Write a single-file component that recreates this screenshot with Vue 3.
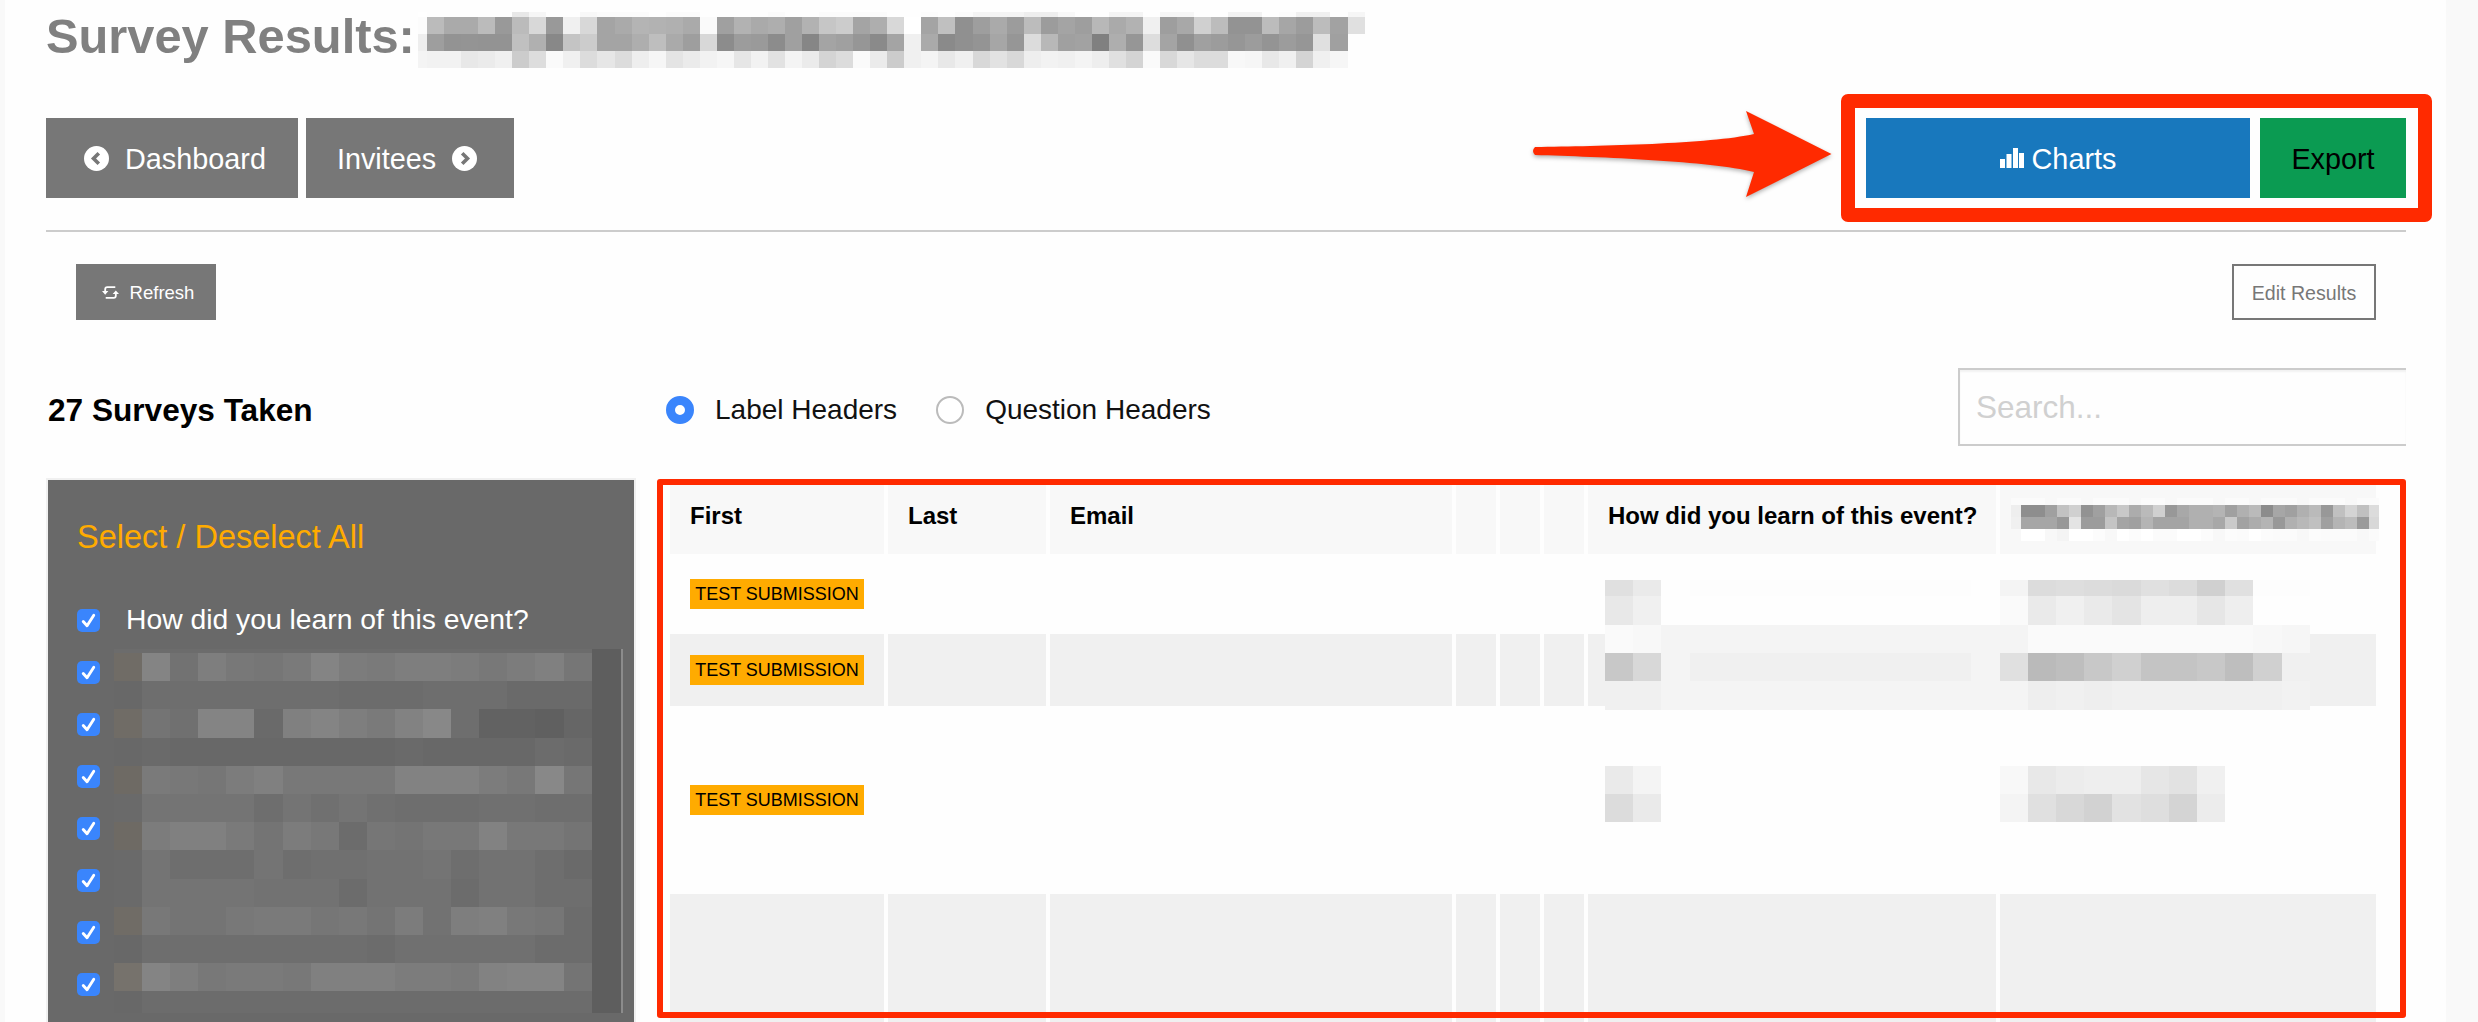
<template>
  <div class="page">
    <div class="title-row">
      <h1>Survey Results:</h1>
      <div class="mosaic title-blur" :style="titleBlur.style">
        <i v-for="(c, i) in titleBlur.cells" :key="i" :style="{ background: c }"></i>
      </div>
    </div>

    <div class="nav-row">
      <a class="btn grey dash">
        <svg class="round" viewBox="0 0 25 25"><circle cx="12.5" cy="12.5" r="12.5" fill="#fff"/><path d="M14.8 7.2 9.5 12.5l5.3 5.3" fill="none" stroke="#777" stroke-width="3.6"/></svg>
        <span>Dashboard</span>
      </a>
      <a class="btn grey invitees">
        <span>Invitees</span>
        <svg class="round" viewBox="0 0 25 25"><circle cx="12.5" cy="12.5" r="12.5" fill="#fff"/><path d="m10.2 7.2 5.3 5.3-5.3 5.3" fill="none" stroke="#777" stroke-width="3.6"/></svg>
      </a>
      <div class="nav-right">
        <a class="btn charts">
          <svg class="bars" viewBox="0 0 24 20" fill="#fff"><rect y="11" width="5" height="9"/><rect x="6.5" y="6" width="5" height="14"/><rect x="13" width="5" height="20"/><rect x="19" y="5" width="5" height="15"/></svg>
          <span>Charts</span>
        </a>
        <a class="btn export"><span>Export</span></a>
      </div>
      <!-- annotation arrow and box -->
      <svg class="arrow" viewBox="0 0 310 100"><path d="M5 39C70 38 180 36 224 26L216 3l85.500 43L216 89l8-25C180 53 70 49 5 47Q1 43 5 39Z" fill="#ff2a00"/></svg>
      <div class="mark-box"></div>
    </div>

    <hr />

    <div class="tool-row">
      <a class="small-btn refresh">
        <svg class="sync" viewBox="0 0 16 16"><path d="M3 7V5a2 2 0 0 1 2-2h7.500M13 9v2a2 2 0 0 1-2 2H3.500" fill="none" stroke="#fff" stroke-width="1.700"/><path d="M0 6.500h6L3 10zM10 9.500h6L13 6z" fill="#fff"/></svg>
        <span>Refresh</span>
      </a>
      <a class="small-btn edit"><span>Edit Results</span></a>
    </div>

    <div class="summary-row">
      <h2>27 Surveys Taken</h2>
      <label class="radio-item"><span class="radio on"></span>Label Headers</label>
      <label class="radio-item second"><span class="radio"></span>Question Headers</label>
      <input class="search" placeholder="Search..." />
    </div>

    <div class="main-row">
      <aside class="sidebar">
        <div class="select-all">Select / Deselect All</div>
        <div v-for="(label, i) in options" :key="i" class="option">
          <span class="check">
            <svg viewBox="0 0 24 24"><path d="M6.500 13l4 4.500 7-11" fill="none" stroke="#fff" stroke-width="3" stroke-linecap="round" stroke-linejoin="round"/></svg>
          </span>
          <span class="option-text">{{ label }}</span>
        </div>
        <div class="mosaic side-blur" :style="sideBlur.style">
          <i v-for="(c, i) in sideBlur.cells" :key="i" :style="{ background: c }"></i>
        </div>
      </aside>

      <table class="results">
        <colgroup>
          <col v-for="(w, i) in colWidths" :key="i" :style="{ width: w + 'px' }" />
        </colgroup>
        <thead>
          <tr>
            <th v-for="(h, i) in headers" :key="i">{{ h }}</th>
          </tr>
        </thead>
        <tbody>
          <tr v-for="(row, r) in rows" :key="r" :class="[row.cls, { odd: r % 2 === 1 }]">
            <td v-for="(w, i) in colWidths" :key="i">
              <span v-if="i === 0 && row.test" class="badge">TEST SUBMISSION</span>
            </td>
          </tr>
        </tbody>
      </table>

      <div v-for="m in tableBlurs" :key="m.name" class="mosaic" :class="m.name" :style="m.style">
        <i v-for="(c, i) in m.cells" :key="i" :style="{ background: c }"></i>
      </div>
      <div class="mark-table"></div>
    </div>
  </div>
</template>

<script setup>
// pixelated regions stand for the text that was blurred out in the screenshot
function mosaic(cols, rows, data) {
  const count = cols.trim().split(/\s+/).length
  const cells = []
  data.forEach((line) => {
    const vals = line.trim().split(/\s+/)
    for (let i = 0; i < count; i++) {
      const v = vals[i]
      if (!v || v === '..') cells.push('transparent')
      else if (v.length === 6) cells.push('#' + v)
      else cells.push('#' + v + v + v)
    }
  })
  return { cells, style: { gridTemplateColumns: cols, gridTemplateRows: rows } }
}

const titleBlur = mosaic(
  '9px ' + Array(55).fill('17.05px').join(' '),
  '5px 17px 17px 17px',
  [
    'ff fe fe fe fe fe e8 f6 fe fe f8 fb fb fb fe fb fb fe fe fe fe fb fe fe fb fb fb fb fe fe fc fe fb f4 f4 f4 ee ee f8 fe fe f4 f4 fe f6 f6 fe fe f2 f2 fe fc f0 f0 fe f6',
    'fc bb aa aa bb 99 bb d8 99 f0 d8 a4 aa b4 b2 b0 aa fa a0 b2 aa ae a0 b2 c6 cc a4 ae d8 ff a4 c0 90 9e aa 9c bc 9c a4 9e b8 aa b2 f0 9e a8 d0 bc 93 93 bc a6 9c bc a2 e0',
    'ee 9e 93 94 93 93 c0 b0 88 c4 cc a4 a4 ae be aa 9e d8 8c 9c 9a 8c a0 86 a4 a0 96 8a a4 f0 aa 8a 90 94 a6 96 dc b8 a0 a2 80 ae 96 dd a4 90 a0 9c 96 9c 94 9c 96 e0 a0 ..',
    'f4 f2 f2 e8 eb f0 cc dd fa f0 dc e6 dc ee f6 e4 eb f2 f6 e6 f2 e2 f4 eb d4 dc fa eb cc f0 f4 e8 f0 d8 e2 d8 ee f2 f0 f4 ee e0 d4 fa d8 e6 dc dc f8 f6 e8 f0 d4 f0 f6 ..',
  ]
)

const sideCols = Array(17).fill('28.100px').join(' ') + ' 29px'
const sideBlur = mosaic(sideCols, '4px ' + Array(12).fill('28.200px').join(' ') + ' 22px', [
  '6c 6c 6c 6c 6c 6c 6c 6c 6c 6c 6c 6c 6c 6c 6c 6c 6c 5e',
  '706c66 84 72 7e 78 76 7a 84 7c 7a 7e 7e 7c 78 7c 80 76 5e',
  '68 6e 6e 6e 6e 6e 6e 6e 6c 6c 6c 6e 6e 6e 6a 6a 6a 5e',
  '706c66 74 70 84 84 6a 80 84 7e 7a 82 88 6e 62 62 60 66 5e',
  '68 6a 68 68 68 68 68 68 68 68 6a 68 68 68 68 6c 6a 5e',
  '6e6a64 7a 78 76 7c 80 78 78 78 78 82 82 82 7c 78 88 76 5e',
  '6a 74 74 74 74 6e 74 70 74 70 6e 6e 6e 70 70 6e 6e 5e',
  '6e6a64 7c 80 80 7a 74 7c 78 6c 76 74 78 78 82 78 78 74 5e',
  '6a 74 6e 6e 6e 74 6e 70 70 72 72 74 6e 72 72 6e 6a 5e',
  '6a 74 74 74 74 72 72 72 6c 72 72 72 6c 72 72 6e 6e 5e',
  '706c66 78 74 74 78 7a 7a 76 78 74 7c 72 7e 80 78 76 6c 5e',
  '68 6e 6e 6e 6e 6e 6e 6e 6e 6c 70 70 70 70 70 6c 6c 5e',
  '76726c 84 7e 78 7a 7a 78 80 80 80 7c 7c 7a 82 84 84 74 5e',
  '68 6c 6c 6c 6c 6c 6c 6c 6c 6c 6c 6c 6c 6c 6c 6c 6c 5e',
])

const cell28 = Array(25).fill('28.200px').join(' ')
const headCols = '10px ' + Array(29).fill('12px').join(' ') + ' 10px'
const tableBlurs = [
  {
    name: 'head-blur',
    ...mosaic(headCols, '7px 12px 12px 12px', [
      'fb fb fb f8 fb fb f8 fb fb fb f8 fb fb f8 fb fb fb f8 fb fb f8 fb fb fb f8 fb fb fb f8 fb fb',
      'ee 8e 8e a0 c2 d0 92 a0 b8 c8 ac ba d0 98 a8 b0 b0 b4 a0 b0 ba 8c a6 a0 b0 ba 98 c0 d4 c0 dc',
      'f0 a6 a6 a6 98 e4 9c 9c c4 a4 a0 b4 a4 a4 a4 b0 b0 a8 ca a2 ac b4 98 b0 b8 c0 a0 b4 bc 9a d8',
      'f8 ff ff f8 f4 ff ff fc f8 ff fc ff fb fb ff ff fc f8 fc fb ff fc fb fb f8 fc fb fb fb f8 fb',
    ]),
  },
  {
    name: 'row-blur-a',
    ...mosaic(cell28, '16px 29px 28px 28px 29px', [
      'e0 ea .. fd fd fd fd fd fd fd fd fd fd .. f4 dc de dc da e0 dc d0 e0 fd fd',
      'e8 f0 .. .. .. .. .. .. .. .. .. .. .. .. fa ea f0 ea e4 ee ee e6 ee .. ..',
      'fa f8 f4 f4 f4 f4 f4 f4 f4 f4 f4 f4 f4 f4 f4 fa fa fa fa fa fa fa fa f8 f6',
      'c8 d8 f4 f0 f0 f0 f0 f0 f0 f0 f0 f0 f0 f4 e0 ba be c8 d0 c4 c4 c8 be d0 f0',
      'f0 f0 f4 f4 f4 f4 f4 f4 f4 f4 f4 f4 f4 f4 f4 ee f0 ee f0 f0 f0 f0 f0 f0 f2',
    ]),
  },
  {
    name: 'row-blur-b',
    ...mosaic(cell28, '28px 28px', [
      'ea f4 .. .. .. .. .. .. .. .. .. .. .. .. f8 e8 ec ee ee e6 e2 f0',
      'dc ea .. .. .. .. .. .. .. .. .. .. .. .. f4 e0 d8 d2 e2 de d4 ec',
    ]),
  },
]

const options = ['How did you learn of this event?', '', '', '', '', '', '', '']
const colWidths = [214, 158, 402, 40, 40, 40, 408, 376]
const headers = ['First', 'Last', 'Email', '', '', '', 'How did you learn of this event?', '']
const rows = [
  { cls: 'h72', test: true },
  { cls: 'h72', test: true },
  { cls: 'h180', test: true },
  { cls: 'h180', test: false },
]
</script>

<style scoped>
.page {
  width: 2441px;
  height: 1022px;
  margin-left: 5px;
  padding: 0 40px 0 41px;
  box-sizing: border-box;
  background: #fefefe;
  overflow: hidden;
  font-family: "Liberation Sans", Arial, sans-serif;
  color: #000;
}

.title-row {
  display: flex;
  height: 68px;
  margin-bottom: 50px;
}

h1 {
  flex: none;
  width: 372px;
  margin: 0;
  padding-top: 2px;
  font-size: 48.800px;
  line-height: 68px;
  font-weight: 700;
  color: #808080;
  white-space: nowrap;
}

.mosaic {
  display: grid;
}

.title-blur {
  margin-top: 12px;
  height: 56px;
}

.nav-row {
  position: relative;
  display: flex;
  gap: 8px;
  height: 80px;
  margin-bottom: 32px;
}

.btn {
  display: flex;
  align-items: center;
  justify-content: center;
  box-sizing: border-box;
  height: 80px;
  font-size: 28.800px;
}

.btn span {
  padding-top: 2px;
}

.grey {
  background: #777;
  color: #fff;
}

.dash {
  width: 252px;
  gap: 16px;
  padding-left: 6px;
}

.invitees {
  width: 208px;
  gap: 16px;
  padding-right: 6px;
}

.round {
  width: 25px;
  height: 25px;
}

.nav-right {
  display: flex;
  gap: 10px;
  margin-left: auto;
}

.charts {
  width: 384px;
  gap: 8px;
  background: #1878bd;
  color: #fff;
}

.bars {
  width: 24px;
  height: 20px;
}

.export {
  width: 146px;
  background: #0b9b52;
}

.arrow {
  position: absolute;
  left: 1484px;
  top: -10px;
  width: 310px;
  height: 100px;
  filter: drop-shadow(0 2px 2px rgba(0, 0, 0, 0.3));
}

.mark-box {
  position: absolute;
  left: 1795px;
  top: -24px;
  width: 591px;
  height: 128px;
  box-sizing: border-box;
  border: 14px solid #ff2a00;
  border-radius: 7px;
}

hr {
  height: 2px;
  margin: 0 0 32px;
  border: 0;
  background: #ccc;
}

.tool-row {
  display: flex;
  justify-content: space-between;
  height: 56px;
  padding: 0 30px;
  margin-bottom: 48px;
}

.small-btn {
  display: flex;
  align-items: center;
  justify-content: center;
  box-sizing: border-box;
}

.small-btn span {
  padding-top: 2px;
}

.refresh {
  width: 140px;
  gap: 11px;
  padding-left: 4px;
  background: #777;
  color: #fff;
  font-size: 18.500px;
}

.sync {
  width: 17px;
  height: 17px;
}

.edit {
  width: 144px;
  border: 2px solid #777;
  color: #777;
  font-size: 19.600px;
}

.summary-row {
  display: flex;
  align-items: center;
  height: 78px;
  margin-bottom: 32px;
}

h2 {
  flex: none;
  width: 618px;
  margin: 0;
  padding: 6px 0 0 2px;
  font-size: 31.600px;
  font-weight: 700;
}

.radio-item {
  display: flex;
  align-items: center;
  gap: 21px;
  padding-top: 6px;
  font-size: 28px;
  color: #111;
}

.second {
  margin-left: 39px;
}

.radio {
  width: 28px;
  height: 28px;
  box-sizing: border-box;
  border: 2px solid #bbb;
  border-radius: 50%;
  background: #fff;
}

.radio.on {
  border: 9.500px solid #3a85fc;
  background: #fff;
}

.search {
  width: 448px;
  height: 78px;
  box-sizing: border-box;
  margin-left: auto;
  padding: 0 0 0 16px;
  border: 2px solid #ccc;
  border-right: 0;
  border-radius: 0;
  outline: 0;
  background: #fefefe;
  box-shadow: inset 0 2px 2px rgba(0, 0, 0, 0.05);
  font: 31.500px "Liberation Sans", Arial, sans-serif;
}

.search::placeholder {
  color: #d0d0d0;
  opacity: 1;
}

.main-row {
  position: relative;
  display: flex;
  gap: 30px;
  height: 544px;
}

.sidebar {
  position: relative;
  flex: none;
  width: 590px;
  height: 600px;
  box-sizing: border-box;
  padding: 37px 0 0 29px;
  border: 2px solid #f0f0f0;
  background: #696969;
  color: #fff;
}

.select-all {
  margin-bottom: 37px;
  font-size: 32.500px;
  line-height: 40px;
  color: #ffab00;
}

.option {
  display: flex;
  align-items: center;
  gap: 26px;
  height: 52px;
  font-size: 28.300px;
}

.option-text {
  margin-bottom: 2px;
}

.check {
  display: flex;
  flex: none;
  width: 23px;
  height: 23px;
  border-radius: 5px;
  background: #3a85fc;
}

.check svg {
  width: 23px;
  height: 23px;
}

.side-blur {
  position: absolute;
  left: 66px;
  top: 169px;
  border-right: 2px solid #8c8c8c;
}

.results {
  flex: none;
  align-self: flex-start;
  width: 1714px;
  table-layout: fixed;
  border-collapse: separate;
  border-spacing: 4px;
}

.results th {
  height: 72px;
  box-sizing: border-box;
  padding: 0 0 4px 20px;
  background: #f8f8f8;
  font-size: 24px;
  font-weight: 700;
  text-align: left;
  white-space: nowrap;
}

.results td {
  box-sizing: border-box;
  padding: 0 0 0 20px;
}

.h72 td {
  height: 72px;
}

.h180 td {
  height: 180px;
}

.odd td {
  background: #f0f0f0;
}

.badge {
  display: block;
  width: 174px;
  height: 30px;
  background: #ffab00;
  font-size: 18px;
  line-height: 30px;
  text-align: center;
}

.head-blur {
  position: absolute;
  left: 1965px;
  top: 20px;
}

.row-blur-a {
  position: absolute;
  left: 1559px;
  top: 102px;
}

.row-blur-b {
  position: absolute;
  left: 1559px;
  top: 288px;
}

.mark-table {
  position: absolute;
  left: 611px;
  top: 1px;
  width: 1749px;
  height: 539px;
  box-sizing: border-box;
  border: 6px solid #ff2a00;
  border-radius: 3px;
}
</style>

<style>
body {
  background: #f9f9f9;
  overflow: hidden;
}
</style>
